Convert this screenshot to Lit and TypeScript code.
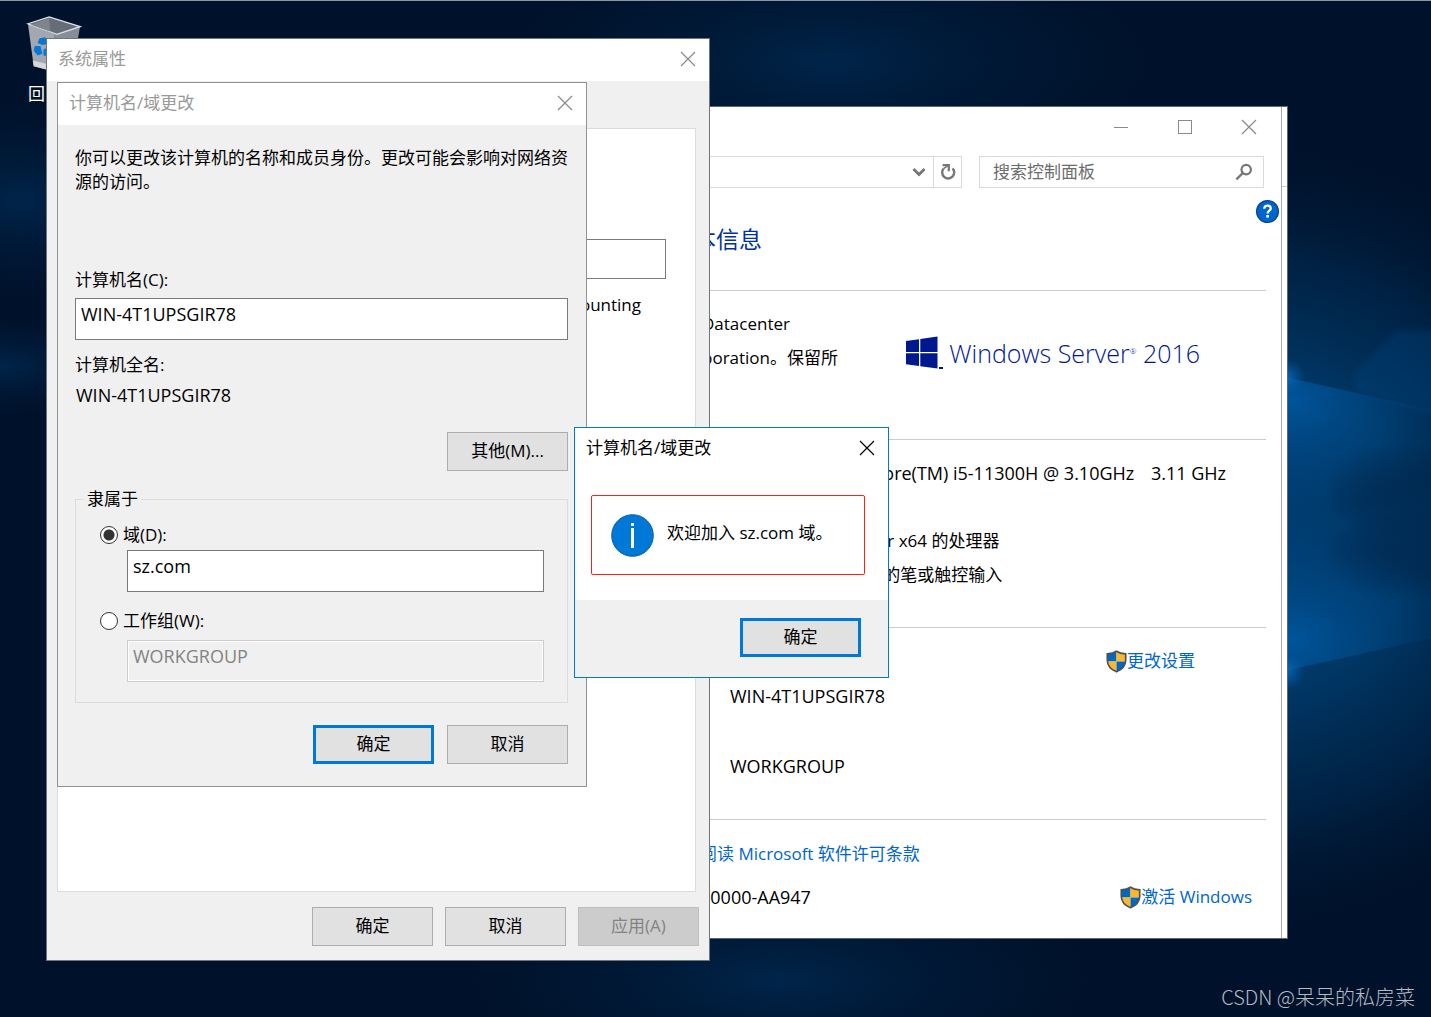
import { LitElement, html, svg, css } from "lit";
import { customElement, property } from "lit/decorators.js";

const closeIcon = html`<svg class="glyph" width="16" height="16" viewBox="0 0 16 16" aria-hidden="true">
  <path d="M1 1L15 15M15 1L1 15" fill="none" stroke="currentColor" stroke-width="1.2" />
</svg>`;

const shieldIcon = html`<svg class="shield" width="21" height="23" viewBox="0 0 20 22" aria-hidden="true">
  <clipPath id="sh"><path d="M10 1.2C7.5 3 4.6 3.6 1.2 3.7V10C1.4 15.4 5 18.8 10 20.9C15 18.8 18.6 15.4 18.8 10V3.7C15.4 3.6 12.5 3 10 1.2Z" /></clipPath>
  <g clip-path="url(#sh)">
    <rect width="10" height="11" fill="#0067c5" />
    <rect x="10" width="10" height="11" fill="#fdb827" />
    <rect y="11" width="10" height="11" fill="#fdb827" />
    <rect x="10" y="11" width="10" height="11" fill="#0067c5" />
  </g>
  <path d="M10 1.2C7.5 3 4.6 3.6 1.2 3.7V10C1.4 15.4 5 18.8 10 20.9C15 18.8 18.6 15.4 18.8 10V3.7C15.4 3.6 12.5 3 10 1.2Z" fill="none" stroke="#4d5257" stroke-width="1.6" />
</svg>`;

const base = css`
  :host {
    display: block;
    font: 17px/24px "Open Sans", "Noto Sans CJK SC", sans-serif;
    color: #000;
  }
  * {
    box-sizing: border-box;
  }
  svg {
    display: block;
    flex: none;
  }
  button,
  input {
    font: inherit;
    color: inherit;
    margin: 0;
  }
  .push {
    min-width: 121px;
    height: 39px;
    padding: 0 8px 2px;
    background: #e1e1e1;
    border: 1px solid #adadad;
    border-radius: 0;
  }
  .push.primary {
    border: 3px solid #0078d7;
  }
  .push:disabled {
    background: #cccccc;
    border-color: #bfbfbf;
    color: #838383;
  }
  .titlebar {
    display: flex;
    align-items: center;
    justify-content: space-between;
    height: 42px;
    padding: 0 0 2px 11px;
    background: #fff;
    color: #999;
  }
  .titlebar h2 {
    margin: 0;
    font: inherit;
  }
  .icon-btn {
    display: grid;
    place-items: center;
    width: 42px;
    height: 40px;
    padding: 0;
    border: 0;
    background: transparent;
    color: #8a8a8a;
  }
  .value {
    font-size: 18px;
  }
`;

@customElement("desk-wallpaper")
class DeskWallpaper extends LitElement {
  static styles = css`
    :host {
      display: block;
    }
    svg {
      display: block;
      width: 100%;
      height: 100%;
    }
  `;
  render() {
    const beam = (y: number, dir: number) => svg`
      <path d="M1270 ${y - 3 * dir}L1431 ${y + 33 * dir}V${y + 160 * dir}H1270Z" fill="url(#beam${dir})" />
      <ellipse cx="1286" cy=${y} rx="20" ry="18" fill="url(#spark)" />`;
    return html`<svg viewBox="0 0 1431 1017" preserveAspectRatio="none" aria-hidden="true">
      <defs>
        <radialGradient id="glow" gradientUnits="userSpaceOnUse" cx="0" cy="0" r="1" gradientTransform="translate(1250 535) scale(400 400)">
          <stop offset="0" stop-color="#003f76" />
          <stop offset="0.4" stop-color="#003765" />
          <stop offset="0.7" stop-color="#002549" stop-opacity="0.8" />
          <stop offset="1" stop-color="#00132d" stop-opacity="0" />
        </radialGradient>
        <radialGradient id="haze">
          <stop offset="0" stop-color="#002a52" stop-opacity="0.8" />
          <stop offset="1" stop-color="#001a38" stop-opacity="0" />
        </radialGradient>
        <radialGradient id="spark">
          <stop offset="0" stop-color="#0a70c8" stop-opacity="0.8" />
          <stop offset="1" stop-color="#0060b0" stop-opacity="0" />
        </radialGradient>
        <radialGradient id="beam1" gradientUnits="userSpaceOnUse" cx="0" cy="0" r="1" gradientTransform="translate(1290 400) scale(170 110)">
          <stop offset="0" stop-color="#0060b0" stop-opacity="0.7" />
          <stop offset="1" stop-color="#004a86" stop-opacity="0" />
        </radialGradient>
        <radialGradient id="beam-1" gradientUnits="userSpaceOnUse" cx="0" cy="0" r="1" gradientTransform="translate(1290 640) scale(170 110)">
          <stop offset="0" stop-color="#0060b0" stop-opacity="0.7" />
          <stop offset="1" stop-color="#004a86" stop-opacity="0" />
        </radialGradient>
        <filter id="edge" x="-20%" y="-20%" width="140%" height="140%"><feGaussianBlur stdDeviation="3" /></filter>
      </defs>
      <rect width="1431" height="1017" fill="#00122b" />
      <ellipse cx="830" cy="60" rx="330" ry="120" fill="url(#haze)" />
      <ellipse cx="780" cy="980" rx="320" ry="110" fill="url(#haze)" />
      <ellipse cx="20" cy="200" rx="160" ry="100" fill="url(#haze)" />
      <ellipse cx="0" cy="365" rx="120" ry="50" fill="url(#haze)" />
      <rect width="1431" height="1017" fill="url(#glow)" />
      <ellipse cx="1400" cy="490" rx="80" ry="50" fill="url(#haze)" />
      <ellipse cx="1410" cy="555" rx="90" ry="45" fill="url(#haze)" />
      <path d="M1352 375L1396 330H1440V415L1356 392Z" fill="#004a86" opacity="0.3" filter="url(#edge)" />
      ${beam(376, 1)} ${beam(671, -1)}
    </svg>`;
  }
}

@customElement("control-panel")
class ControlPanel extends LitElement {
  static styles = [
    base,
    css`
      .back {
        padding-right: 5px;
        border: 1px solid #60666d;
        border-left: 0;
        background: linear-gradient(#d0d0d0, #d0d0d0) right 79px / 5px 1px no-repeat #fff;
      }
      .front {
        border-right: 1px solid #a8a8a8;
        background: #fff;
      }
      .caption {
        display: flex;
        justify-content: flex-end;
        height: 49px;
      }
      .caption .icon-btn {
        width: 64px;
        height: 39px;
      }
      .tools {
        display: flex;
        gap: 17px;
        padding-right: 17px;
      }
      .address {
        display: flex;
        flex: 1;
        height: 32px;
        justify-content: flex-end;
        border: 1px solid #d9d9d9;
        color: #767676;
      }
      .address .icon-btn {
        width: 28px;
        height: 30px;
        color: #767676;
      }
      .address .reload {
        border-left: 1px solid #d9d9d9;
      }
      .search {
        display: flex;
        align-items: center;
        width: 285px;
        height: 32px;
        padding-right: 10px;
        border: 1px solid #d9d9d9;
        color: #767676;
      }
      .search input {
        flex: 1;
        min-width: 0;
        height: 30px;
        padding: 0 0 1px 13px;
        border: 0;
        outline: 0;
        background: transparent;
      }
      .search input::placeholder {
        color: #6d6d6d;
        opacity: 1;
      }
      .help {
        display: flex;
        justify-content: flex-end;
        height: 35px;
        padding: 12px 2px 0 0;
      }
      .page {
        padding-right: 15px;
      }
      h1 {
        margin: 0;
        padding: 0 0 35px 3px;
        font-size: 23px;
        font-weight: 400;
        line-height: 32px;
        color: #003399;
      }
      section {
        display: flex;
        justify-content: space-between;
        border-top: 1px solid #cccccc;
        padding: 16px 0 0;
      }
      .rows {
        display: grid;
        grid-auto-rows: 34px;
        align-content: start;
        line-height: 34px;
        white-space: nowrap;
      }
      .edition {
        height: 149px;
        padding-left: 12px;
      }
      .system {
        height: 188px;
        justify-content: flex-end;
        padding-right: 40px;
      }
      .system .sep {
        padding-left: 12px;
      }
      .system .cpu {
        grid-row: 1;
      }
      .system .kind {
        grid-row: 3;
        padding-left: 4px;
      }
      .system .pen {
        grid-row: 4;
      }
      .name {
        height: 192px;
        padding: 16px 71px 0 40px;
      }
      .name .host {
        grid-row: 2;
      }
      .name .group {
        grid-row: 4;
      }
      .name .rows {
        grid-auto-rows: 35px;
      }
      .activation {
        height: 119px;
        padding: 17px 14px 0 0;
      }
      .activation .rows {
        row-gap: 9px;
        padding-left: 10px;
      }
      .activation .act {
        padding-top: 43px;
      }
      .link {
        display: flex;
        align-items: center;
        height: 34px;
        color: #0066cc;
        text-decoration: none;
      }
      .logo {
        display: flex;
        align-items: center;
        align-self: flex-start;
        gap: 5px;
        padding: 26px 66px 0 0;
        color: #00188f;
        font-size: 25px;
        font-weight: 300;
        line-height: 40px;
        white-space: nowrap;
      }
      .logo sup {
        font-size: 8px;
        line-height: 8px;
        vertical-align: 9px;
      }
    `,
  ];
  render() {
    return html`<div class="back">
      <div class="front">
        <div class="caption">
          <button class="icon-btn" aria-label="最小化">
            <svg width="16" height="16" viewBox="0 0 16 16"><path d="M1 8.5H15" stroke="currentColor" /></svg>
          </button>
          <button class="icon-btn" aria-label="最大化">
            <svg width="16" height="16" viewBox="0 0 16 16"><rect x="1.5" y="1.5" width="13" height="13" fill="none" stroke="currentColor" /></svg>
          </button>
          <button class="icon-btn" aria-label="关闭">${closeIcon}</button>
        </div>
        <div class="tools">
          <div class="address">
            <button class="icon-btn" aria-label="历史记录">
              <svg width="14" height="10" viewBox="0 0 14 10"><path d="M1.5 2L7 7.5L12.5 2" fill="none" stroke="currentColor" stroke-width="2.8" /></svg>
            </button>
            <button class="icon-btn reload" aria-label="刷新">
              <svg width="16" height="18" viewBox="0 0 16 18">
                <path d="M12.6 5.4A6 6 0 1 1 3.6 5.6" fill="none" stroke="currentColor" stroke-width="2.4" />
                <path d="M2.6 2.2H8.8V8.2" fill="none" stroke="currentColor" stroke-width="2.2" />
                <path d="M3.6 5.6L8.4 2.4" stroke="currentColor" stroke-width="1.6" />
              </svg>
            </button>
          </div>
          <div class="search">
            <input type="text" aria-label="搜索控制面板" placeholder="搜索控制面板" />
            <svg width="18" height="18" viewBox="0 0 18 18" aria-hidden="true">
              <circle cx="11.2" cy="6.6" r="4.7" fill="none" stroke="currentColor" stroke-width="2.2" />
              <path d="M7.8 10L1.4 16.4" stroke="currentColor" stroke-width="2.4" />
            </svg>
          </div>
        </div>
        <div class="help">
          <svg width="23" height="23" viewBox="0 0 23 23" aria-hidden="true">
            <circle cx="11.5" cy="11.5" r="10.9" fill="#0066cc" stroke="#00468c" stroke-width="1.2" />
            <path d="M8.2 8.8C8.2 6.6 9.6 5.6 11.5 5.6C13.4 5.6 14.8 6.7 14.8 8.4C14.8 10.6 11.6 10.7 11.6 13.4" fill="none" stroke="#fff" stroke-width="2.3" />
            <rect x="10.3" y="15" width="2.6" height="2.6" fill="#fff" />
          </svg>
        </div>
        <div class="page">
          <h1>本信息</h1>
          <section class="edition">
            <div class="rows"><span>Datacenter</span><span>poration。保留所</span></div>
            <div class="logo">
              <svg width="38" height="34" viewBox="0 0 38 34" aria-hidden="true">
                <g fill="#00188f">
                  <path d="M0 5L13 3.2V16H0ZM14.3 3L31.5 0.5V16H14.3ZM0 17.2H13V30L0 28.2ZM14.3 17.2H31.5V32.5L14.3 30.2Z" />
                  <rect x="33" y="31" width="4" height="2" />
                </g>
              </svg>
              <span>Windows Server<sup>®</sup> 2016</span>
            </div>
          </section>
          <section class="system">
            <div class="rows">
              <span class="cpu value">ore(TM) i5-11300H @ 3.10GHz<span class="sep"> 3.11 GHz</span></span>
              <span class="kind">r x64 的处理器</span>
              <span class="pen">的笔或触控输入</span>
            </div>
          </section>
          <section class="name">
            <div class="rows"><span class="host value">WIN-4T1UPSGIR78</span><span class="group value">WORKGROUP</span></div>
            <a class="link" href="#settings">${shieldIcon}更改设置</a>
          </section>
          <section class="activation">
            <div class="rows">
              <a class="link" href="#license">阅读 Microsoft 软件许可条款</a>
              <span class="value">00000-AA947</span>
            </div>
            <div class="act"><a class="link" href="#activate">${shieldIcon}激活 Windows</a></div>
          </section>
        </div>
      </div>
    </div>`;
  }
}

@customElement("system-properties")
class SystemProperties extends LitElement {
  static styles = [
    base,
    css`
      .window {
        border: 1px solid #70757a;
        background: #f0f0f0;
      }
      .body {
        padding: 47px 10px 14px;
      }
      .sheet {
        display: flex;
        flex-direction: column;
        align-items: flex-end;
        gap: 14px;
        height: 764px;
        margin-right: 3px;
        padding: 110px 29px 0 0;
        border: 1px solid #dcdcdc;
        background: #fff;
      }
      .sheet input {
        width: 300px;
        height: 40px;
        border: 1px solid #7a7a7a;
        border-radius: 0;
        background: #fff;
      }
      .sheet p {
        margin: 0;
        padding-right: 25px;
      }
      .actions {
        display: flex;
        justify-content: flex-end;
        gap: 12px;
        padding: 15px 0 0;
      }
    `,
  ];
  render() {
    return html`<div class="window">
      <div class="titlebar">
        <h2>系统属性</h2>
        <button class="icon-btn" aria-label="关闭">${closeIcon}</button>
      </div>
      <div class="body">
        <div class="sheet">
          <input type="text" aria-label="计算机描述" />
          <p>ounting</p>
        </div>
        <div class="actions">
          <button class="push">确定</button>
          <button class="push">取消</button>
          <button class="push" disabled>应用(A)</button>
        </div>
      </div>
    </div>`;
  }
}

@customElement("rename-dialog")
class RenameDialog extends LitElement {
  @property() computer = "WIN-4T1UPSGIR78";

  static styles = [
    base,
    css`
      .window {
        border: 1px solid #8f9296;
        background: #f0f0f0;
      }
      .body {
        display: flex;
        flex-direction: column;
        padding: 21px 18px 22px 17px;
      }
      p {
        margin: 0 0 74px;
      }
      .field {
        display: block;
        width: 100%;
        height: 42px;
        padding: 0 5px 10px;
        border: 1px solid #7a7a7a;
        border-radius: 0;
        outline: 0;
        background: #fff;
        font-size: 18px;
      }
      .field:disabled {
        border-color: #cccccc;
        background: #f0f0f0;
        box-shadow: inset 0 0 0 1px #fff;
        color: #838383;
      }
      .caption {
        margin-bottom: 6px;
      }
      .full {
        margin-top: 13px;
      }
      .value {
        padding-left: 1px;
        margin-bottom: 25px;
      }
      .more {
        align-self: flex-end;
      }
      fieldset {
        margin: 16px 0 22px;
        padding: 12px 23px 20px 24px;
        border: 1px solid #dcdcdc;
      }
      legend {
        margin-left: -16px;
        padding: 0 3px;
      }
      .choice {
        display: flex;
        align-items: center;
        gap: 5px;
      }
      .choice input {
        appearance: none;
        width: 18px;
        height: 18px;
        border: 1px solid #333;
        border-radius: 50%;
        background: #fff;
      }
      .choice input:checked {
        background: radial-gradient(circle, #333 0 5px, #fff 6px);
      }
      .indent {
        padding: 3px 0 17px 27px;
      }
      .indent.last {
        padding: 7px 0 0 27px;
      }
      .actions {
        display: flex;
        justify-content: flex-end;
        gap: 13px;
      }
    `,
  ];
  render() {
    return html`<div class="window">
      <div class="titlebar">
        <h2>计算机名/域更改</h2>
        <button class="icon-btn" aria-label="关闭">${closeIcon}</button>
      </div>
      <div class="body">
        <p>你可以更改该计算机的名称和成员身份。更改可能会影响对网络资源的访问。</p>
        <label class="caption" for="name">计算机名(C):</label>
        <input class="field" id="name" type="text" .value=${this.computer} />
        <div class="caption full">计算机全名:</div>
        <div class="value">${this.computer}</div>
        <button class="push more">其他(M)...</button>
        <fieldset>
          <legend>隶属于</legend>
          <label class="choice"><input type="radio" name="member" checked />域(D):</label>
          <div class="indent"><input class="field" type="text" aria-label="域" value="sz.com" /></div>
          <label class="choice"><input type="radio" name="member" />工作组(W):</label>
          <div class="indent last"><input class="field" type="text" aria-label="工作组" value="WORKGROUP" disabled /></div>
        </fieldset>
        <div class="actions">
          <button class="push primary">确定</button>
          <button class="push">取消</button>
        </div>
      </div>
    </div>`;
  }
}

@customElement("welcome-message")
class WelcomeMessage extends LitElement {
  static styles = [
    base,
    css`
      .window {
        border: 1px solid #0078d7;
        background: #fff;
      }
      .titlebar,
      .icon-btn {
        color: #000;
      }
      .notice {
        display: flex;
        align-items: center;
        gap: 13px;
        height: 80px;
        margin: 25px 23px 25px 16px;
        padding: 0 19px;
        border: 1px solid #ff2015;
        border-radius: 2px;
        white-space: nowrap;
      }
      .notice span {
        padding-bottom: 4px;
      }
      .footer {
        display: flex;
        justify-content: flex-end;
        padding: 18px 27px 20px;
        background: #f0f0f0;
      }
    `,
  ];
  render() {
    return html`<div class="window" role="dialog" aria-label="计算机名/域更改">
      <div class="titlebar">
        <h2>计算机名/域更改</h2>
        <button class="icon-btn" aria-label="关闭">${closeIcon}</button>
      </div>
      <div class="notice">
        <svg width="43" height="43" viewBox="0 0 43 43" aria-hidden="true">
          <circle cx="21.5" cy="21.5" r="20.8" fill="#0078d7" stroke="#0a5ca3" />
          <rect x="20" y="9" width="3" height="3" fill="#fff" />
          <rect x="20" y="14" width="3" height="20" fill="#fff" />
        </svg>
        <span>欢迎加入 sz.com 域。</span>
      </div>
      <div class="footer"><button class="push primary">确定</button></div>
    </div>`;
  }
}

@customElement("app-root")
class AppRoot extends LitElement {
  static styles = css`
    :host {
      display: block;
      position: relative;
      box-sizing: border-box;
      min-height: 100vh;
      overflow: hidden;
      border-top: 1px solid #8d959e;
      background: #00122b;
      font: 17px/24px "Open Sans", "Noto Sans CJK SC", sans-serif;
    }
    .wallpaper {
      position: absolute;
      inset: 0;
    }
    .bin {
      position: absolute;
      left: 26px;
      top: 13px;
      color: #fff;
    }
    .bin svg {
      display: block;
    }
    .bin span {
      display: block;
      padding: 8px 0 0 2px;
    }
    .panel {
      position: absolute;
      left: 690px;
      top: 105px;
      width: 598px;
    }
    .props {
      position: absolute;
      left: 46px;
      top: 37px;
      width: 664px;
    }
    .rename {
      position: absolute;
      left: 57px;
      top: 81px;
      width: 530px;
    }
    .welcome {
      position: absolute;
      left: 574px;
      top: 426px;
      width: 315px;
    }
    .mark {
      position: absolute;
      right: 16px;
      bottom: 7px;
      color: #b4bac2;
      font: 300 20px/26px "Noto Sans CJK SC", sans-serif;
    }
  `;
  render() {
    return html`
      <desk-wallpaper class="wallpaper"></desk-wallpaper>
      <div class="bin">
        <svg width="56" height="60" viewBox="0 0 58 60" aria-hidden="true">
          <path d="M2 9L30 20L27 58L8 53Z" fill="#a3a8b0" />
          <path d="M30 20L56 12L49 52L27 58Z" fill="#888e97" />
          <path d="M7 47L27 52V58L8 53Z" fill="#d5d7da" />
          <path d="M2 9L24 2L56 12L32 20Z" fill="#666d78" stroke="#dfe2e6" stroke-width="1.3" />
          <path d="M24 3L25 17L5 10Z" fill="#7e858f" />
          <path d="M14 24L20 23L23 30L17 31L12 29ZM9 32L15 32L17 40L12 42L8 37ZM18 36L24 32V43L18 42Z" fill="#0878d8" />
        </svg>
        <span>回</span>
      </div>
      <control-panel class="panel"></control-panel>
      <system-properties class="props"></system-properties>
      <rename-dialog class="rename"></rename-dialog>
      <welcome-message class="welcome"></welcome-message>
      <div class="mark">CSDN @呆呆的私房菜</div>
    `;
  }
}
